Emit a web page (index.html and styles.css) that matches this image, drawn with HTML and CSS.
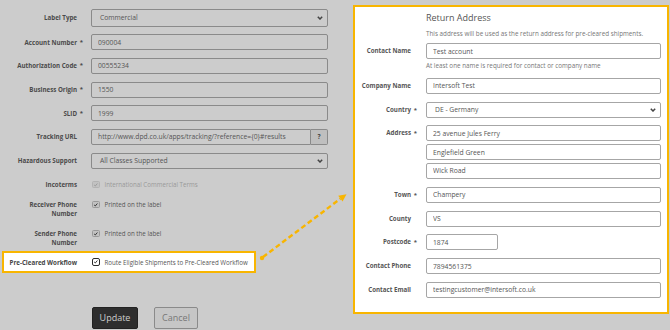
FILE: index.html
```html
<!DOCTYPE html>
<html lang="en">
<head>
    <meta charset="UTF-8">
    <meta name="viewport" content="width=device-width, initial-scale=1.0">
    <title>Carrier Settings</title>
    <link rel="stylesheet" href="styles.css">
</head>
<body>
    <div class="page">
        <form class="settings">
            <div class="row">
                <label class="label">Label Type</label>
                <div class="select tall"><span>Commercial</span><svg class="chevron" viewBox="0 0 6 4"><polyline points="0.8,0.8 3,3 5.2,0.8"/></svg></div>
            </div>
            <div class="row">
                <label class="label">Account Number<span class="req">*</span></label>
                <input class="input" type="text" value="090004">
            </div>
            <div class="row">
                <label class="label">Authorization Code<span class="req">*</span></label>
                <input class="input" type="text" value="00555234">
            </div>
            <div class="row">
                <label class="label">Business Origin<span class="req">*</span></label>
                <input class="input" type="text" value="1550">
            </div>
            <div class="row">
                <label class="label">SLID<span class="req">*</span></label>
                <input class="input" type="text" value="1999">
            </div>
            <div class="row">
                <label class="label">Tracking URL</label>
                <div class="group">
                    <input class="input" type="text" value="http://www.dpd.co.uk/apps/tracking/?reference={0}#results">
                    <span class="addon">?</span>
                </div>
            </div>
            <div class="row">
                <label class="label">Hazardous Support</label>
                <div class="select"><span>All Classes Supported</span><svg class="chevron" viewBox="0 0 6 4"><polyline points="0.8,0.8 3,3 5.2,0.8"/></svg></div>
            </div>
            <div class="row check incoterms">
                <label class="label">Incoterms</label>
                <span class="option disabled"><span class="box"><svg viewBox="0 0 8 8"><polyline points="1.6,4.2 3.3,5.8 6.4,2.2"/></svg></span>International Commercial Terms</span>
            </div>
            <div class="row check">
                <label class="label">Receiver Phone Number</label>
                <span class="option"><span class="box"><svg viewBox="0 0 8 8"><polyline points="1.6,4.2 3.3,5.8 6.4,2.2"/></svg></span>Printed on the label</span>
            </div>
            <div class="row check sender">
                <label class="label">Sender Phone Number</label>
                <span class="option"><span class="box"><svg viewBox="0 0 8 8"><polyline points="1.6,4.2 3.3,5.8 6.4,2.2"/></svg></span>Printed on the label</span>
            </div>
            <div class="row check highlight">
                <label class="label">Pre-Cleared Workflow</label>
                <span class="option"><span class="box outline"><svg viewBox="0 0 8 8"><polyline points="1.6,4.2 3.3,5.8 6.4,2.2"/></svg></span>Route Eligible Shipments to Pre-Cleared Workflow</span>
            </div>
            <div class="actions">
                <button type="button" class="btn primary">Update</button>
                <button type="button" class="btn">Cancel</button>
            </div>
        </form>

        <section class="panel">
            <div class="panel-head">
                <h3 class="panel-title">Return Address</h3>
                <p class="panel-sub">This address will be used as the return address for pre-cleared shipments.</p>
            </div>
            <div class="prow">
                <label class="label">Contact Name</label>
                <div>
                    <input class="input" type="text" value="Test account">
                    <div class="note">At least one name is required for contact or company name</div>
                </div>
            </div>
            <div class="prow">
                <label class="label">Company Name</label>
                <input class="input" type="text" value="Intersoft Test">
            </div>
            <div class="prow">
                <label class="label">Country<span class="req">*</span></label>
                <div class="select"><span>DE - Germany</span><svg class="chevron" viewBox="0 0 6 4"><polyline points="0.8,0.8 3,3 5.2,0.8"/></svg></div>
            </div>
            <div class="prow">
                <label class="label">Address<span class="req">*</span></label>
                <div class="stack">
                    <input class="input" type="text" value="25 avenue Jules Ferry">
                    <input class="input" type="text" value="Englefield Green">
                    <input class="input" type="text" value="Wick Road">
                </div>
            </div>
            <div class="prow">
                <label class="label">Town<span class="req">*</span></label>
                <input class="input" type="text" value="Champery">
            </div>
            <div class="prow">
                <label class="label">County</label>
                <input class="input" type="text" value="VS">
            </div>
            <div class="prow">
                <label class="label">Postcode<span class="req">*</span></label>
                <input class="input short" type="text" value="1874">
            </div>
            <div class="prow">
                <label class="label">Contact Phone</label>
                <input class="input" type="text" value="7894561375">
            </div>
            <div class="prow">
                <label class="label">Contact Email</label>
                <input class="input" type="text" value="testingcustomer@intersoft.co.uk">
            </div>
        </section>
    </div>

    <!-- dashed pointer from the workflow option to the panel -->
    <svg class="pointer" viewBox="0 0 670 330">
        <circle cx="262" cy="258" r="2.2"/>
        <line x1="263" y1="257" x2="340.4" y2="198.7"/>
        <polygon points="346.5,194.3 342.6,201.6 338.2,195.8"/>
    </svg>
</body>
</html>
```

FILE: styles.css
```css
body {
    margin: 0;
    width: 670px;
    height: 330px;
    overflow: hidden;
    position: relative;
    background: #cccccc;
    font-family: "Open Sans", "Liberation Sans", sans-serif;
    color: #555;
}
.page {
    display: flex;
    align-items: flex-start;
}
.settings {
    width: 328px;
    padding-top: 9px;
}
.row {
    display: grid;
    grid-template-columns: 83px 237px;
    column-gap: 8px;
    align-items: center;
    margin-bottom: 7.7px;
}
.label {
    box-sizing: border-box;
    font-size: 6.2px;
    font-weight: 700;
    line-height: 9px;
    color: #4a4a4a;
    text-align: right;
    padding-right: 6px;
}
.row .label {
    padding-left: 10px;
}
.req {
    display: inline-block;
    width: 6px;
    margin-right: -6px;
    text-align: right;
    vertical-align: top;
    font-size: 6px;
}
.input {
    display: block;
    box-sizing: border-box;
    width: 100%;
    height: 16px;
    margin: 0;
    padding: 0 6px;
    border: 1px solid #8a8a8a;
    border-radius: 2px;
    background: transparent;
    font-family: "Open Sans", "Liberation Sans", sans-serif;
    font-size: 6.75px;
    color: #555;
    outline: none;
}
.select {
    box-sizing: border-box;
    height: 16px;
    display: flex;
    align-items: center;
    justify-content: space-between;
    padding: 0 4px 0 8px;
    border: 1px solid #8a8a8a;
    border-radius: 2px;
    font-size: 6.75px;
    color: #555;
}
.select.tall {
    height: 17.5px;
}
.chevron {
    width: 6px;
    height: 4px;
    fill: none;
    stroke: #444;
    stroke-width: 1.5;
}
.group {
    display: flex;
}
.group .input {
    flex: 1;
    border-radius: 2px 0 0 2px;
}
.addon {
    box-sizing: border-box;
    width: 17px;
    height: 16px;
    display: flex;
    align-items: center;
    justify-content: center;
    border: 1px solid #8a8a8a;
    border-left: none;
    border-radius: 0 2px 2px 0;
    background: #bfbfbf;
    font-size: 6.5px;
    font-weight: 700;
    color: #444;
}

/* checkbox rows */
.check {
    align-items: start;
    margin-bottom: 11px;
}
.incoterms {
    margin-top: 11.2px;
}
.sender {
    margin-bottom: 4.2px;
}
.option {
    display: flex;
    align-items: center;
    white-space: nowrap;
    font-size: 6.2px;
    line-height: 9px;
    color: #555;
}
.option.disabled {
    color: #999;
}
.box {
    box-sizing: border-box;
    flex: none;
    width: 7.5px;
    height: 7.5px;
    margin: 0 5px 0 1px;
    display: flex;
    border: 1px solid #9a9a9a;
    border-radius: 1.5px;
    background: #c2c2c2;
}
.box svg {
    width: 100%;
    height: 100%;
    fill: none;
    stroke: #333;
    stroke-width: 1.4;
}
.disabled .box {
    border-color: #b3b3b3;
}
.disabled .box svg {
    stroke: #9a9a9a;
}
.box.outline {
    border: 1.2px solid #2b2b2b;
    border-radius: 2px;
    background: #fff;
}
.highlight {
    box-sizing: border-box;
    width: 254px;
    margin-left: 2px;
    padding: 4.5px 0;
    grid-template-columns: 79px 160px;
    border: 2px solid #f8b500;
    background: #fff;
}
.highlight .label {
    padding-left: 2px;
    color: #444;
}
.actions {
    display: flex;
    gap: 16px;
    margin-top: 33.5px;
    padding-left: 92px;
}
.btn {
    box-sizing: border-box;
    height: 22px;
    padding: 0;
    border: 1px solid #8a8a8a;
    border-radius: 2px;
    background: #c6c6c6;
    font-family: "Open Sans", "Liberation Sans", sans-serif;
    font-size: 9px;
    color: #777;
    width: 44px;
}
.btn.primary {
    width: 46px;
    background: #2e2e2e;
    border-color: #222;
    color: #cfcfcf;
}

/* return address panel */
.panel {
    box-sizing: border-box;
    width: 316px;
    height: 309px;
    margin: 5px 0 0 25px;
    padding-top: 4px;
    border: 2px solid #f8b500;
    background: #fff;
}
.panel-head {
    margin-left: 71px;
}
.panel-title {
    margin: 0;
    font-size: 9px;
    line-height: 14px;
    font-weight: 400;
    color: #555;
}
.panel-sub {
    margin: 4px 0;
    font-size: 6.3px;
    line-height: 10px;
    color: #777;
}
.prow {
    display: grid;
    grid-template-columns: 61px 235px;
    column-gap: 10px;
    align-items: start;
    margin-bottom: 7.8px;
}
.prow .label {
    line-height: 16px;
    padding-right: 5px;
    color: #555;
}
.prow .input,
.prow .select {
    border-color: #a6a6a6;
}
.note {
    margin-top: 2px;
    font-size: 6.3px;
    line-height: 9px;
    color: #777;
}
.stack {
    display: flex;
    flex-direction: column;
    gap: 2.8px;
}
.input.short {
    width: 72px;
}
.pointer {
    position: absolute;
    left: 0;
    top: 0;
    width: 670px;
    height: 330px;
    pointer-events: none;
    fill: #f8b500;
    stroke: #f8b500;
}
.pointer line {
    stroke-width: 2.4;
    stroke-dasharray: 5 3;
}
.pointer polygon,
.pointer circle {
    stroke: none;
}
```
